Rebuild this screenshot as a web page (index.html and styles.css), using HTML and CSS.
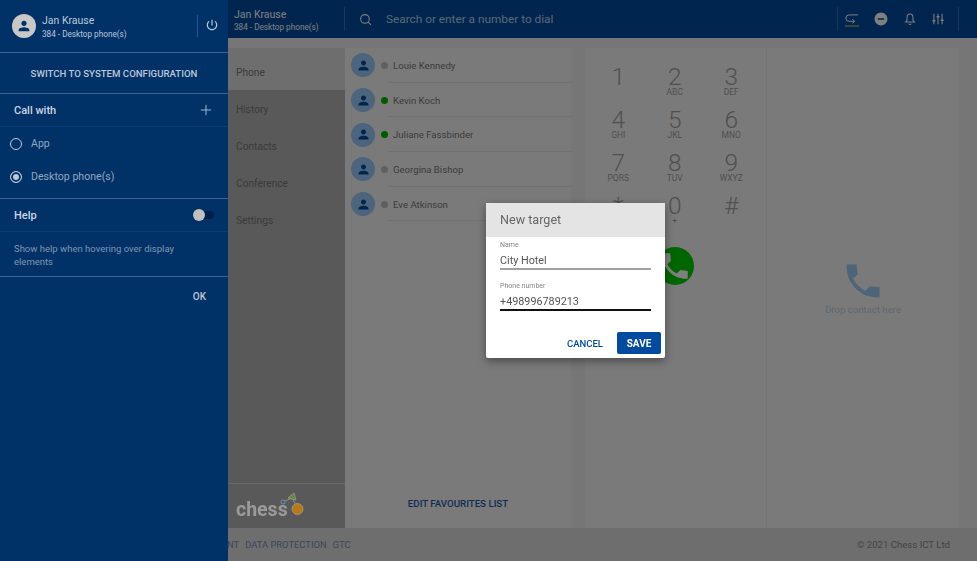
FILE: index.html
```html
<!DOCTYPE html>
<html lang="en">
<head>
  <meta charset="UTF-8" />
  <title>Phone</title>
  <link rel="stylesheet" href="styles.css">
</head>
<body>

  <div class="app">
    <header class="topbar">
      <div class="top-user">
        <div class="top-name">Jan Krause</div>
        <div class="top-line">384 - Desktop phone(s)</div>
      </div>
      <div class="top-search">
        <svg class="search-icon" viewBox="0 0 24 24"><circle cx="11" cy="11" r="8"/><path d="M17 17l5 5"/></svg>
        <span>Search or enter a number to dial</span>
      </div>
      <div class="top-icons">
        <svg class="forward-icon" viewBox="0 0 24 24"><path d="M22 5H7a5.500 5.500 0 0 0 0 11h9"/><path d="M12.500 12.500l4 3.500-4 3.500"/><path class="forward-bar" d="M0 24h24"/></svg>
        <svg class="fill-icon" viewBox="0 0 24 24"><path d="M12 2C6.480 2 2 6.480 2 12s4.480 10 10 10 10-4.480 10-10S17.520 2 12 2zm5 11H7v-2h10v2z"/></svg>
        <svg class="line-icon" viewBox="0 0 24 24"><path d="M12 3.500c-3.500 0-5 2.500-5 5.500v5l-2.500 3h15L17 14V9c0-3-1.500-5.500-5-5.500z"/><path d="M10 20c.4 1 1.100 1.500 2 1.500s1.600-.5 2-1.500"/></svg>
        <svg class="line-icon" viewBox="0 0 24 24"><path d="M5 3v18M12 3v18M19 3v18"/><path class="knob" d="M2.500 15h5M9.500 8h5M16.500 14h5"/></svg>
      </div>
    </header>

    <div class="main">
      <nav class="sidenav">
        <div class="nav-links">
          <a class="active" href="#">Phone</a>
          <a href="#">History</a>
          <a href="#">Contacts</a>
          <a href="#">Conference</a>
          <a href="#">Settings</a>
        </div>
        <div class="logo">
          <span>chess</span>
          <svg viewBox="0 0 26 26"><path class="stem" d="M3 10l9-4 5 9"/><circle class="cherry" cx="17.500" cy="17" r="5.500"/><path class="leaf" d="M8 6l6-5 2 7z"/><circle class="seed" cx="3" cy="10" r="2"/></svg>
        </div>
      </nav>

      <section class="favourites">
        <ul class="contacts">
          <li><span class="avatar"><svg viewBox="0 0 24 24"><path d="M12 12c2.210 0 4-1.790 4-4s-1.790-4-4-4-4 1.790-4 4 1.790 4 4 4zm0 2c-2.670 0-8 1.340-8 4v2h16v-2c0-2.660-5.330-4-8-4z"/></svg></span><span class="dot"></span><span class="contact-name">Louie Kennedy</span></li>
          <li><span class="avatar"><svg viewBox="0 0 24 24"><path d="M12 12c2.210 0 4-1.790 4-4s-1.790-4-4-4-4 1.790-4 4 1.790 4 4 4zm0 2c-2.670 0-8 1.340-8 4v2h16v-2c0-2.660-5.330-4-8-4z"/></svg></span><span class="dot online"></span><span class="contact-name">Kevin Koch</span></li>
          <li><span class="avatar"><svg viewBox="0 0 24 24"><path d="M12 12c2.210 0 4-1.790 4-4s-1.790-4-4-4-4 1.790-4 4 1.790 4 4 4zm0 2c-2.670 0-8 1.340-8 4v2h16v-2c0-2.660-5.330-4-8-4z"/></svg></span><span class="dot online"></span><span class="contact-name">Juliane Fassbinder</span></li>
          <li><span class="avatar"><svg viewBox="0 0 24 24"><path d="M12 12c2.210 0 4-1.790 4-4s-1.790-4-4-4-4 1.790-4 4 1.790 4 4 4zm0 2c-2.670 0-8 1.340-8 4v2h16v-2c0-2.660-5.330-4-8-4z"/></svg></span><span class="dot"></span><span class="contact-name">Georgina Bishop</span></li>
          <li><span class="avatar"><svg viewBox="0 0 24 24"><path d="M12 12c2.210 0 4-1.790 4-4s-1.790-4-4-4-4 1.790-4 4 1.790 4 4 4zm0 2c-2.670 0-8 1.340-8 4v2h16v-2c0-2.660-5.330-4-8-4z"/></svg></span><span class="dot"></span><span class="contact-name">Eve Atkinson</span></li>
        </ul>
        <a class="edit-link" href="#">EDIT FAVOURITES LIST</a>
      </section>

      <section class="dialpad">
        <div class="keys">
          <div class="key"><b>1</b><small></small></div>
          <div class="key"><b>2</b><small>ABC</small></div>
          <div class="key"><b>3</b><small>DEF</small></div>
          <div class="key"><b>4</b><small>GHI</small></div>
          <div class="key"><b>5</b><small>JKL</small></div>
          <div class="key"><b>6</b><small>MNO</small></div>
          <div class="key"><b>7</b><small>PQRS</small></div>
          <div class="key"><b>8</b><small>TUV</small></div>
          <div class="key"><b>9</b><small>WXYZ</small></div>
          <div class="key"><b>*</b><small></small></div>
          <div class="key"><b>0</b><small>+</small></div>
          <div class="key"><b>#</b><small></small></div>
        </div>
        <div class="call-btn"><svg viewBox="0 0 24 24"><path d="M21 15.460l-5.270-.61-2.520 2.520c-2.830-1.440-5.150-3.750-6.590-6.590l2.530-2.530L8.540 3H3.030C2.450 13.180 10.820 21.550 21 20.970v-5.510z"/></svg></div>
      </section>

      <section class="dropzone">
        <svg viewBox="0 0 24 24"><path d="M21 15.460l-5.270-.61-2.520 2.520c-2.830-1.440-5.150-3.750-6.590-6.590l2.530-2.530L8.540 3H3.030C2.450 13.180 10.820 21.550 21 20.970v-5.510z"/></svg>
        <span>Drop contact here</span>
      </section>
    </div>

    <footer class="footer">
      <div class="footer-links">
        <a href="#">IMPRINT</a>
        <a href="#">DATA PROTECTION</a>
        <a href="#">GTC</a>
      </div>
      <div class="copyright">© 2021 Chess ICT Ltd</div>
    </footer>
  </div>

  <div class="overlay"></div>

  <aside class="drawer">
    <div class="drawer-user">
      <span class="drawer-avatar"><svg viewBox="0 0 24 24"><path d="M12 12c2.210 0 4-1.790 4-4s-1.790-4-4-4-4 1.790-4 4 1.790 4 4 4zm0 2c-2.670 0-8 1.340-8 4v2h16v-2c0-2.660-5.330-4-8-4z"/></svg></span>
      <div class="drawer-who">
        <div class="drawer-name">Jan Krause</div>
        <div class="drawer-line">384 - Desktop phone(s)</div>
      </div>
      <button class="power-btn"><svg viewBox="0 0 24 24"><path d="M13 3h-2v10h2V3zm4.830 2.170l-1.420 1.420C17.990 7.860 19 9.810 19 12c0 3.870-3.130 7-7 7s-7-3.130-7-7c0-2.190 1.010-4.140 2.580-5.420L6.170 5.170C4.230 6.820 3 9.260 3 12c0 4.970 4.030 9 9 9s9-4.030 9-9c0-2.740-1.230-5.180-3.170-6.830z"/></svg></button>
    </div>
    <div class="switch-row">SWITCH TO SYSTEM CONFIGURATION</div>
    <div class="section-head">
      <span>Call with</span>
      <svg class="plus" viewBox="0 0 14 14"><path d="M7 1v12M1 7h12"/></svg>
    </div>
    <div class="radio-row"><span class="radio"></span>App</div>
    <div class="radio-row last"><span class="radio checked"></span>Desktop phone(s)</div>
    <div class="section-head">
      <span>Help</span>
      <span class="toggle"></span>
    </div>
    <p class="help-text">Show help when hovering over display elements</p>
    <div class="drawer-ok">OK</div>
  </aside>

  <div class="dialog">
    <div class="dialog-title">New target</div>
    <div class="dialog-body">
      <div class="field">
        <label>Name</label>
        <div class="field-value">City Hotel</div>
      </div>
      <div class="field focused">
        <label>Phone number</label>
        <div class="field-value">+498996789213</div>
      </div>
    </div>
    <div class="dialog-actions">
      <button class="cancel-btn">CANCEL</button>
      <button class="save-btn">SAVE</button>
    </div>
  </div>

</body>
</html>
```

FILE: styles.css
```css
* {
  box-sizing: border-box;
}

html, body {
  height: 100%;
}

body {
  margin: 0;
  font-family: Roboto, 'Liberation Sans', sans-serif;
  font-size: 11px;
  background: #dcdcdc;
  overflow: hidden;
}

a {
  text-decoration: none;
  color: inherit;
}

.app {
  height: 100vh;
  display: grid;
  grid-template-rows: 38px 1fr 33px;
}

/* top bar */
.topbar {
  background: #004a9f;
  color: #fff;
  display: flex;
  align-items: center;
  padding-left: 234px;
}

.top-user {
  width: 110px;
  padding-top: 2px;
}

.top-name {
  font-size: 10.5px;
  line-height: 13px;
}

.top-line {
  font-size: 8.200px;
  line-height: 12px;
}

.top-search {
  flex: 1;
  height: 24px;
  display: flex;
  align-items: center;
  gap: 14px;
  padding-left: 14px;
  border-left: 1px solid #336eb2;
  font-size: 11.800px;
  color: #b8cfe8;
}

.search-icon {
  width: 13px;
  height: 13px;
  fill: none;
  stroke: #fff;
  stroke-width: 2;
}

.top-icons {
  display: grid;
  grid-template-columns: repeat(4, 28.600px);
  justify-items: center;
  align-items: center;
  height: 24px;
  margin-right: 18px;
  padding-right: 5.600px;
  border-left: 1px solid #336eb2;
  border-right: 1px solid #336eb2;
}

.top-icons svg {
  width: 14px;
  height: 14px;
}

.forward-icon {
  fill: none;
  stroke: #fff;
  stroke-width: 1.7;
  overflow: visible;
}

.forward-bar {
  stroke: #e8c85a;
}

.fill-icon {
  fill: #fff;
  transform: scale(1.1);
}

.line-icon {
  fill: none;
  stroke: #fff;
  stroke-width: 1.8;
}

.knob {
  stroke-width: 2.6;
}

.main {
  display: flex;
  min-height: 0;
  padding: 10px 18px 0 0;
  background: #ececec;
}

/* left nav */
.sidenav {
  width: 345px;
  margin-top: -10px;
  padding: 10px 0 0 228px;
  flex: none;
  display: flex;
  flex-direction: column;
  background: linear-gradient(#ececec 10px, #b2b2b2 10px);
}

.nav-links {
  flex: 1;
  display: flex;
  flex-direction: column;
}

.nav-links a {
  height: 37px;
  padding-left: 8px;
  line-height: 37px;
  font-size: 10.200px;
  color: #777;
}

.nav-links .active {
  height: 42px;
  line-height: 50px;
  background: #dcdcdc;
}

.nav-links .active + a {
  margin-top: 1px;
}

/* the logo keeps its own colours above the dim layer */
.logo {
  height: 45px;
  padding: 4px 0 0 8px;
  display: flex;
  align-items: center;
  border-top: 1px solid #6a6a6a;
  position: relative;
  z-index: 1;
}

.logo span {
  font-size: 19.500px;
  font-weight: 700;
  color: #9a9a9a;
  margin-top: 2px;
}

.logo svg {
  width: 26px;
  height: 26px;
  margin: -7px 0 0 -8px;
  overflow: visible;
}

.stem {
  fill: none;
  stroke: #8a8a8a;
  stroke-width: 1;
}

.cherry {
  fill: #b97a14;
  stroke: #9a9a9a;
  stroke-width: 0.8;
}

.leaf {
  fill: #5f8a30;
  stroke: #9a9a9a;
  stroke-width: 0.8;
}

.seed {
  fill: #2a5a90;
  stroke: #9a9a9a;
  stroke-width: 0.8;
}

/* favourites */
.favourites {
  width: 226px;
  flex: none;
  display: flex;
  flex-direction: column;
  background: #f5f5f5;
}

.contacts {
  list-style: none;
  margin: 0;
  padding: 0;
  flex: 1;
}

.contacts li {
  height: 34.700px;
  display: flex;
  align-items: center;
  padding-left: 6px;
  position: relative;
}

.contacts li::after {
  content: "";
  position: absolute;
  left: 43px;
  right: 0;
  bottom: 0;
  border-bottom: 1px solid #e2e2e2;
}

.avatar {
  width: 24px;
  height: 24px;
  border-radius: 50%;
  background: #98c8f8;
  display: flex;
  align-items: center;
  justify-content: center;
}

.avatar svg {
  width: 15px;
  height: 15px;
  fill: #004a9f;
}

.dot {
  width: 7px;
  height: 7px;
  margin: 0 5px 0 6px;
  border-radius: 50%;
  background: #c0c0c0;
}

.dot.online {
  background: #00b400;
}

.contact-name {
  font-size: 9.600px;
  color: #777;
}

.edit-link {
  height: 50px;
  text-align: center;
  line-height: 51px;
  font-size: 9.700px;
  font-weight: 500;
  color: #1a5aa8;
}

/* dial pad */
.dialpad {
  width: 182px;
  flex: none;
  margin-left: 14px;
  background: #f5f5f5;
  border-right: 1px solid #e8e8e8;
}

.keys {
  display: grid;
  grid-template-columns: repeat(3, 56.500px);
  grid-auto-rows: 43px;
  padding: 18px 0 0 5px;
}

.key {
  display: flex;
  flex-direction: column;
  align-items: center;
  color: #a0a0a0;
}

.key b {
  font-size: 24.500px;
  font-weight: 300;
  line-height: 22px;
}

.key small {
  font-size: 8.500px;
  line-height: 8px;
}

.call-btn {
  width: 38px;
  height: 38px;
  margin: 9px 0 0 71px;
  border-radius: 50%;
  background: #00cc00;
  display: flex;
  align-items: center;
  justify-content: center;
}

.call-btn svg {
  width: 34px;
  height: 34px;
  fill: #fff;
}

/* drop target */
.dropzone {
  flex: 1;
  display: flex;
  flex-direction: column;
  align-items: center;
  padding-top: 211px;
  background: #f5f5f5;
  color: #bcd0e4;
  font-size: 9.600px;
}

.dropzone svg {
  width: 44px;
  height: 44px;
  margin-bottom: 1px;
  fill: #9ccbf0;
}

.footer {
  display: flex;
  justify-content: space-between;
  align-items: center;
  padding: 0 27px 0 202px;
  font-size: 9.400px;
  color: #888;
}

.footer-links {
  display: flex;
  gap: 6px;
  color: #7090b8;
}

.copyright {
  font-size: 9.600px;
}

/* dim layer, drawer and dialog sit over the app */
.overlay {
  position: fixed;
  inset: 0;
  background: rgba(0, 0, 0, 0.5);
}

.drawer {
  position: fixed;
  left: 0;
  top: 0;
  bottom: 0;
  width: 228px;
  background: #003268;
  color: #bcc8d8;
}

.drawer-user {
  height: 53px;
  display: flex;
  align-items: center;
  padding: 0 6px 0 12px;
  border-bottom: 1px solid #3f6390;
}

.drawer-avatar {
  width: 24px;
  height: 24px;
  border-radius: 50%;
  background: #c8c8c8;
  display: flex;
  align-items: center;
  justify-content: center;
}

.drawer-avatar svg {
  width: 16px;
  height: 16px;
  fill: #003268;
}

.drawer-who {
  flex: 1;
  margin-left: 6px;
  padding-top: 2px;
}

.drawer-name {
  font-size: 10.5px;
  line-height: 14px;
}

.drawer-line {
  font-size: 8.200px;
  line-height: 12px;
}

.power-btn {
  width: 25px;
  height: 22px;
  padding: 0 0 0 4px;
  background: none;
  border: none;
  border-left: 1px solid #2a5388;
}

.power-btn svg {
  width: 14px;
  height: 14px;
  fill: #bcc8d8;
}

.switch-row {
  height: 41px;
  line-height: 41px;
  text-align: center;
  font-size: 9.650px;
  font-weight: 500;
  border-bottom: 1px solid #3f6390;
}

.section-head {
  height: 33px;
  display: flex;
  align-items: center;
  justify-content: space-between;
  padding: 0 14px;
  border-bottom: 1px solid #0d3c70;
  font-size: 11px;
  font-weight: 500;
  color: #ccd5e0;
}

.plus {
  width: 12px;
  height: 12px;
  margin-right: 2px;
  fill: none;
  stroke: #bcc8d8;
  stroke-width: 1;
}

.radio-row {
  height: 33px;
  display: flex;
  align-items: center;
  gap: 9px;
  padding: 0 0 0 10px;
  font-size: 10.600px;
  color: #93a7bf;
}

.radio-row.last {
  height: 39px;
  padding-bottom: 5px;
  border-bottom: 1px solid #3f6390;
}

.radio {
  width: 12px;
  height: 12px;
  border: 1px solid #bcc8d8;
  border-radius: 50%;
}

.radio.checked {
  background: #bcc8d8;
  box-shadow: inset 0 0 0 2px #003268;
}

.toggle {
  width: 21px;
  height: 8px;
  border-radius: 4px;
  background: #001f4d;
  position: relative;
}

.toggle::before {
  content: "";
  position: absolute;
  left: 0;
  top: -2px;
  width: 12px;
  height: 12px;
  border-radius: 50%;
  background: #c0c0c0;
}

.help-text {
  margin: 0;
  height: 45px;
  padding: 10px 40px 0 14px;
  border-bottom: 1px solid #3f6390;
  font-size: 9.500px;
  line-height: 13px;
  color: #7f97b5;
}

.drawer-ok {
  padding: 14px 22px 0 0;
  text-align: right;
  font-size: 10px;
  font-weight: 500;
}

.dialog {
  position: fixed;
  left: 486px;
  top: 203px;
  width: 179px;
  height: 155px;
  display: flex;
  flex-direction: column;
  background: #fff;
  border-radius: 2px;
  box-shadow: 0 3px 8px rgba(0, 0, 0, 0.4);
}

.dialog-title {
  height: 34px;
  padding-left: 14px;
  line-height: 34px;
  font-size: 12.600px;
  color: #666;
  background: #e4e4e4;
}

.dialog-body {
  flex: 1;
  padding: 3px 14px 0;
}

.field {
  height: 41px;
}

.field label {
  display: block;
  padding-top: 1px;
  font-size: 7px;
  line-height: 9px;
  color: #888;
}

.field-value {
  height: 20px;
  padding-top: 4px;
  font-size: 10.800px;
  line-height: 14px;
  color: #555;
  border-bottom: 2px solid #a0a0a0;
}

.focused .field-value {
  border-bottom-color: #111;
}

.dialog-actions {
  display: flex;
  justify-content: flex-end;
  align-items: center;
  gap: 14px;
  padding: 0 4px 4px 0;
}

.dialog-actions button {
  border: none;
  font-family: inherit;
  font-size: 9.500px;
  font-weight: 500;
}

.cancel-btn {
  padding: 0;
  background: none;
  color: #004a9f;
}

.dialog-actions .save-btn {
  width: 44px;
  height: 22px;
  border-radius: 2px;
  background: #004a9f;
  color: #fff;
  font-size: 10px;
  font-weight: 700;
}
```
